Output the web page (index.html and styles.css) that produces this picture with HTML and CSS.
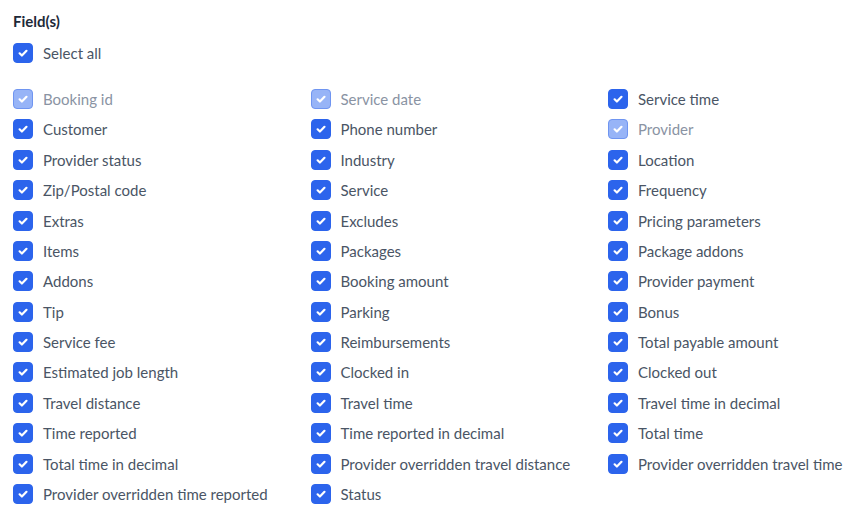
FILE: index.html
```html
<!DOCTYPE html>
<html lang="en">
<head>
<meta charset="utf-8">
<title>Field(s)</title>
<link rel="stylesheet" href="styles.css">
</head>
<body>
<div class="panel">
  <div class="title">Field(s)</div>
  <label class="item select-all"><span class="box"><svg viewBox="0 0 20 20"><path d="M6.6 10.3l2.3 2.2L13.5 7.8"/></svg></span><span class="text">Select all</span></label>
  <div class="grid">
    <label class="item disabled"><span class="box"><svg viewBox="0 0 20 20"><path d="M6.6 10.3l2.3 2.2L13.5 7.8"/></svg></span><span class="text">Booking id</span></label>
    <label class="item disabled"><span class="box"><svg viewBox="0 0 20 20"><path d="M6.6 10.3l2.3 2.2L13.5 7.8"/></svg></span><span class="text">Service date</span></label>
    <label class="item"><span class="box"><svg viewBox="0 0 20 20"><path d="M6.6 10.3l2.3 2.2L13.5 7.8"/></svg></span><span class="text">Service time</span></label>

    <label class="item"><span class="box"><svg viewBox="0 0 20 20"><path d="M6.6 10.3l2.3 2.2L13.5 7.8"/></svg></span><span class="text">Customer</span></label>
    <label class="item"><span class="box"><svg viewBox="0 0 20 20"><path d="M6.6 10.3l2.3 2.2L13.5 7.8"/></svg></span><span class="text">Phone number</span></label>
    <label class="item disabled"><span class="box"><svg viewBox="0 0 20 20"><path d="M6.6 10.3l2.3 2.2L13.5 7.8"/></svg></span><span class="text">Provider</span></label>

    <label class="item"><span class="box"><svg viewBox="0 0 20 20"><path d="M6.6 10.3l2.3 2.2L13.5 7.8"/></svg></span><span class="text">Provider status</span></label>
    <label class="item"><span class="box"><svg viewBox="0 0 20 20"><path d="M6.6 10.3l2.3 2.2L13.5 7.8"/></svg></span><span class="text">Industry</span></label>
    <label class="item"><span class="box"><svg viewBox="0 0 20 20"><path d="M6.6 10.3l2.3 2.2L13.5 7.8"/></svg></span><span class="text">Location</span></label>

    <label class="item"><span class="box"><svg viewBox="0 0 20 20"><path d="M6.6 10.3l2.3 2.2L13.5 7.8"/></svg></span><span class="text">Zip/Postal code</span></label>
    <label class="item"><span class="box"><svg viewBox="0 0 20 20"><path d="M6.6 10.3l2.3 2.2L13.5 7.8"/></svg></span><span class="text">Service</span></label>
    <label class="item"><span class="box"><svg viewBox="0 0 20 20"><path d="M6.6 10.3l2.3 2.2L13.5 7.8"/></svg></span><span class="text">Frequency</span></label>

    <label class="item"><span class="box"><svg viewBox="0 0 20 20"><path d="M6.6 10.3l2.3 2.2L13.5 7.8"/></svg></span><span class="text">Extras</span></label>
    <label class="item"><span class="box"><svg viewBox="0 0 20 20"><path d="M6.6 10.3l2.3 2.2L13.5 7.8"/></svg></span><span class="text">Excludes</span></label>
    <label class="item"><span class="box"><svg viewBox="0 0 20 20"><path d="M6.6 10.3l2.3 2.2L13.5 7.8"/></svg></span><span class="text">Pricing parameters</span></label>

    <label class="item"><span class="box"><svg viewBox="0 0 20 20"><path d="M6.6 10.3l2.3 2.2L13.5 7.8"/></svg></span><span class="text">Items</span></label>
    <label class="item"><span class="box"><svg viewBox="0 0 20 20"><path d="M6.6 10.3l2.3 2.2L13.5 7.8"/></svg></span><span class="text">Packages</span></label>
    <label class="item"><span class="box"><svg viewBox="0 0 20 20"><path d="M6.6 10.3l2.3 2.2L13.5 7.8"/></svg></span><span class="text">Package addons</span></label>

    <label class="item"><span class="box"><svg viewBox="0 0 20 20"><path d="M6.6 10.3l2.3 2.2L13.5 7.8"/></svg></span><span class="text">Addons</span></label>
    <label class="item"><span class="box"><svg viewBox="0 0 20 20"><path d="M6.6 10.3l2.3 2.2L13.5 7.8"/></svg></span><span class="text">Booking amount</span></label>
    <label class="item"><span class="box"><svg viewBox="0 0 20 20"><path d="M6.6 10.3l2.3 2.2L13.5 7.8"/></svg></span><span class="text">Provider payment</span></label>

    <label class="item"><span class="box"><svg viewBox="0 0 20 20"><path d="M6.6 10.3l2.3 2.2L13.5 7.8"/></svg></span><span class="text">Tip</span></label>
    <label class="item"><span class="box"><svg viewBox="0 0 20 20"><path d="M6.6 10.3l2.3 2.2L13.5 7.8"/></svg></span><span class="text">Parking</span></label>
    <label class="item"><span class="box"><svg viewBox="0 0 20 20"><path d="M6.6 10.3l2.3 2.2L13.5 7.8"/></svg></span><span class="text">Bonus</span></label>

    <label class="item"><span class="box"><svg viewBox="0 0 20 20"><path d="M6.6 10.3l2.3 2.2L13.5 7.8"/></svg></span><span class="text">Service fee</span></label>
    <label class="item"><span class="box"><svg viewBox="0 0 20 20"><path d="M6.6 10.3l2.3 2.2L13.5 7.8"/></svg></span><span class="text">Reimbursements</span></label>
    <label class="item"><span class="box"><svg viewBox="0 0 20 20"><path d="M6.6 10.3l2.3 2.2L13.5 7.8"/></svg></span><span class="text">Total payable amount</span></label>

    <label class="item"><span class="box"><svg viewBox="0 0 20 20"><path d="M6.6 10.3l2.3 2.2L13.5 7.8"/></svg></span><span class="text">Estimated job length</span></label>
    <label class="item"><span class="box"><svg viewBox="0 0 20 20"><path d="M6.6 10.3l2.3 2.2L13.5 7.8"/></svg></span><span class="text">Clocked in</span></label>
    <label class="item"><span class="box"><svg viewBox="0 0 20 20"><path d="M6.6 10.3l2.3 2.2L13.5 7.8"/></svg></span><span class="text">Clocked out</span></label>

    <label class="item"><span class="box"><svg viewBox="0 0 20 20"><path d="M6.6 10.3l2.3 2.2L13.5 7.8"/></svg></span><span class="text">Travel distance</span></label>
    <label class="item"><span class="box"><svg viewBox="0 0 20 20"><path d="M6.6 10.3l2.3 2.2L13.5 7.8"/></svg></span><span class="text">Travel time</span></label>
    <label class="item"><span class="box"><svg viewBox="0 0 20 20"><path d="M6.6 10.3l2.3 2.2L13.5 7.8"/></svg></span><span class="text">Travel time in decimal</span></label>

    <label class="item"><span class="box"><svg viewBox="0 0 20 20"><path d="M6.6 10.3l2.3 2.2L13.5 7.8"/></svg></span><span class="text">Time reported</span></label>
    <label class="item"><span class="box"><svg viewBox="0 0 20 20"><path d="M6.6 10.3l2.3 2.2L13.5 7.8"/></svg></span><span class="text">Time reported in decimal</span></label>
    <label class="item"><span class="box"><svg viewBox="0 0 20 20"><path d="M6.6 10.3l2.3 2.2L13.5 7.8"/></svg></span><span class="text">Total time</span></label>

    <label class="item"><span class="box"><svg viewBox="0 0 20 20"><path d="M6.6 10.3l2.3 2.2L13.5 7.8"/></svg></span><span class="text">Total time in decimal</span></label>
    <label class="item"><span class="box"><svg viewBox="0 0 20 20"><path d="M6.6 10.3l2.3 2.2L13.5 7.8"/></svg></span><span class="text">Provider overridden travel distance</span></label>
    <label class="item"><span class="box"><svg viewBox="0 0 20 20"><path d="M6.6 10.3l2.3 2.2L13.5 7.8"/></svg></span><span class="text">Provider overridden travel time</span></label>

    <label class="item"><span class="box"><svg viewBox="0 0 20 20"><path d="M6.6 10.3l2.3 2.2L13.5 7.8"/></svg></span><span class="text">Provider overridden time reported</span></label>
    <label class="item"><span class="box"><svg viewBox="0 0 20 20"><path d="M6.6 10.3l2.3 2.2L13.5 7.8"/></svg></span><span class="text">Status</span></label>
  </div>
</div>
</body>
</html>
```

FILE: styles.css
```css
* { box-sizing: border-box; }
html, body { margin: 0; padding: 0; background: #ffffff; }
body { font-family: Lato, "Noto Sans", sans-serif; }

.panel {
  display: flex;
  flex-direction: column;
  padding: 11px 13px 0 13px;
}

.title {
  font-size: 15px;
  font-weight: 700;
  line-height: 20px;
  color: #1d2939;
  margin-bottom: 7px;
}

.item {
  display: flex;
  align-items: center;
  height: 30.4px;
  font-size: 15px;
  color: #4a5565;
  cursor: pointer;
}

.select-all { margin-bottom: 15.4px; }

.box {
  flex: 0 0 20px;
  width: 20px;
  height: 20px;
  border-radius: 4px;
  background: #2c64ec;
  border: 1px solid #2c64ec;
  display: flex;
  align-items: center;
  justify-content: center;
  margin-right: 10px;
}

.box svg {
  width: 20px;
  height: 20px;
  flex: 0 0 20px;
  fill: none;
  stroke: #ffffff;
  stroke-width: 2.2;
  stroke-linecap: round;
  stroke-linejoin: round;
}

.disabled .box {
  background: #97b4f7;
  border-color: #6f95f1;
}

.disabled .text { color: #8a93a3; }

.grid {
  display: grid;
  grid-template-columns: 297.5px 297.5px 1fr;
  grid-auto-rows: 30.4px;
}
```
